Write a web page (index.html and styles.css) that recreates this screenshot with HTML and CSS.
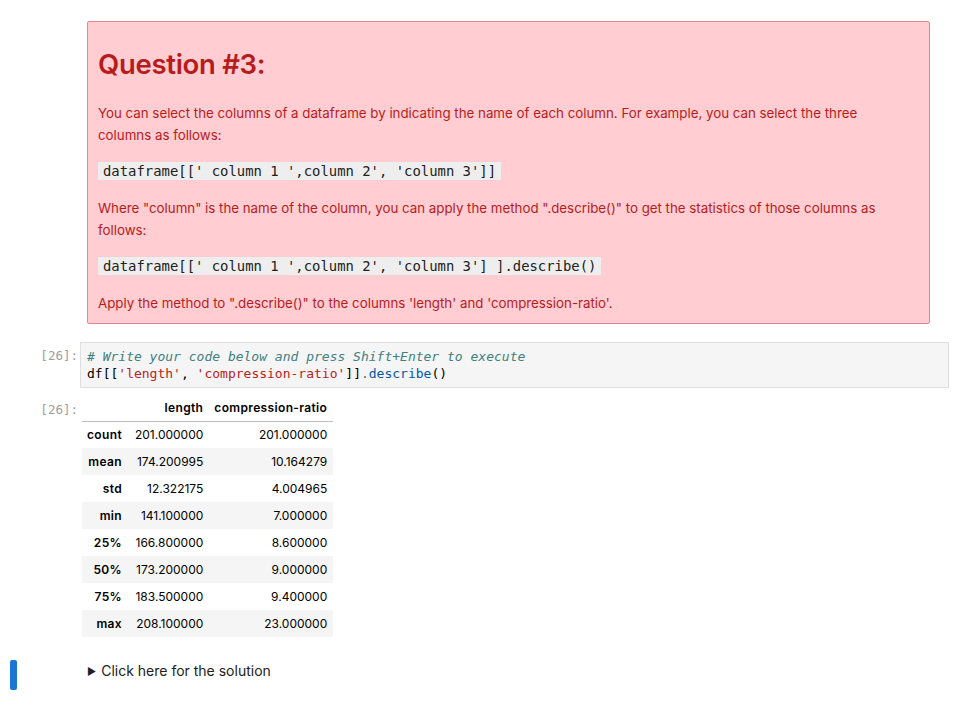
FILE: index.html
```html
<!DOCTYPE html>
<html>
<head>
<meta charset="utf-8">
<link rel="stylesheet" href="styles.css">
</head>
<body>
<div class="notebook">
  <div class="cell md-cell">
    <div class="prompt"></div>
    <div class="md">
      <div class="alert">
        <h1>Question #3:</h1>
        <p>You can select the columns of a dataframe by indicating the name of each column. For example, you can select the three columns as follows:</p>
        <p class="codep"><code>dataframe[[' column 1 ',column 2', 'column 3']]</code></p>
        <p>Where "column" is the name of the column, you can apply the method ".describe()" to get the statistics of those columns as follows:</p>
        <p class="codep"><code>dataframe[[' column 1 ',column 2', 'column 3'] ].describe()</code></p>
        <p>Apply the method to ".describe()" to the columns 'length' and 'compression-ratio'.</p>
      </div>
    </div>
  </div>

  <div class="cell code-cell">
    <div class="prompt">[26]:</div>
    <div class="input"><pre><span class="c"># Write your code below and press Shift+Enter to execute</span>
df[[<span class="s">'length'</span>, <span class="s">'compression-ratio'</span>]]<span class="o">.</span><span class="f">describe</span>()</pre></div>
  </div>

  <div class="cell out-cell">
    <div class="prompt">[26]:</div>
    <div class="output">
      <table class="df">
        <thead><tr><th></th><th>length</th><th>compression-ratio</th></tr></thead>
        <tbody>
          <tr><th>count</th><td>201.000000</td><td>201.000000</td></tr>
          <tr><th>mean</th><td>174.200995</td><td>10.164279</td></tr>
          <tr><th>std</th><td>12.322175</td><td>4.004965</td></tr>
          <tr><th>min</th><td>141.100000</td><td>7.000000</td></tr>
          <tr><th>25%</th><td>166.800000</td><td>8.600000</td></tr>
          <tr><th>50%</th><td>173.200000</td><td>9.000000</td></tr>
          <tr><th>75%</th><td>183.500000</td><td>9.400000</td></tr>
          <tr><th>max</th><td>208.100000</td><td>23.000000</td></tr>
        </tbody>
      </table>
    </div>
  </div>

  <div class="cell sol-cell active">
    <div class="bar"></div>
    <div class="prompt"></div>
    <div class="md"><details><summary>Click here for the solution</summary></details></div>
  </div>
</div>
</body>
</html>
```

FILE: styles.css
```css
* { box-sizing: border-box; }
html, body { margin: 0; padding: 0; background: #fff; }
body {
  font-family: Inter, "Noto Sans", "Liberation Sans", sans-serif;
  color: #212121;
  width: 965px;
  height: 708px;
  overflow: hidden;
}
.notebook { padding-top: 21px; padding-right: 16px; }
.cell { display: flex; position: relative; }
.prompt {
  width: 80px;
  flex: none;
  text-align: right;
  padding-right: 2px;
  font-family: "DejaVu Sans Mono", "Liberation Mono", monospace;
  font-size: 12.5px;
  color: #9e9e9e;
}
.md { flex: 1; padding-left: 7px; padding-right: 3px; }
.alert {
  background: #ffcdd2;
  border: 1px solid #e08a8f;
  border-radius: 2px;
  color: #b71c1c;
  padding: 23px 20px 1px 10px;
  margin-right: 16px;
  height: 303px;
}
.alert h1 {
  margin: 0 0 19px 0;
  font-size: 27.5px;
  font-weight: 600;
  line-height: 38px;
  letter-spacing: -0.3px;
}
.alert p {
  margin: 0 0 14px 0;
  font-size: 13.3px;
  line-height: 22px;
}
.alert p.codep { margin-bottom: 15px; }
.alert code {
  font-family: "DejaVu Sans Mono", "Liberation Mono", monospace;
  font-size: 13.9px;
  background: #eeeeee;
  color: #212121;
  padding: 1px 5px;
}
.code-cell { margin-top: 18px; }
.code-cell .prompt { padding-top: 6px; }
.input {
  flex: 1;
  background: #f5f5f5;
  border: 1px solid #e0e0e0;
  height: 46px;
  padding: 5px 6px;
}
.input pre {
  margin: 0;
  font-family: "DejaVu Sans Mono", "Liberation Mono", monospace;
  font-size: 13px;
  line-height: 17px;
  color: #000;
}
.c { color: #408080; font-style: italic; }
.s { color: #ba2121; }
.o { color: #666; }
.f { color: #0055aa; }
.out-cell { margin-top: 13px; }
.out-cell .prompt { padding-top: 1px; }
.output { flex: 1; padding-left: 2px; }
table.df {
  border-collapse: collapse;
  font-size: 12px;
  color: #000;
}
table.df th, table.df td {
  text-align: right;
  padding: 0 5px;
  height: 27px;
  vertical-align: middle;
  line-height: 14px;
}
table.df th { letter-spacing: 0.35px; }
table.df thead th {
  height: 20px;
  vertical-align: top;
  padding-top: 0;
  border-bottom: 1px solid #bdbdbd;
  font-weight: 600;
}
table.df tbody th { font-weight: 600; }
table.df tbody tr:nth-child(even) { background: #f5f5f5; }
table.df td:nth-child(2) { padding-left: 8px; }
table.df thead th:nth-child(3) { padding-left: 6px; padding-right: 6px; }
table.df td:nth-child(3) { padding-right: 6px; }
.sol-cell { margin-top: 22px; height: 32px; }
.bar {
  position: absolute;
  left: 10px;
  top: 1px;
  width: 7px;
  height: 30px;
  background: #1976d2;
  border-radius: 2px;
}
.sol-cell .md { padding-top: 3px; }
summary {
  font-size: 14px;
  color: #212121;
  cursor: pointer;
  list-style: none;
}
summary::before {
  content: "\25B6";
  font-size: 10px;
  margin-right: 5px;
  position: relative;
  top: -1px;
}
```
